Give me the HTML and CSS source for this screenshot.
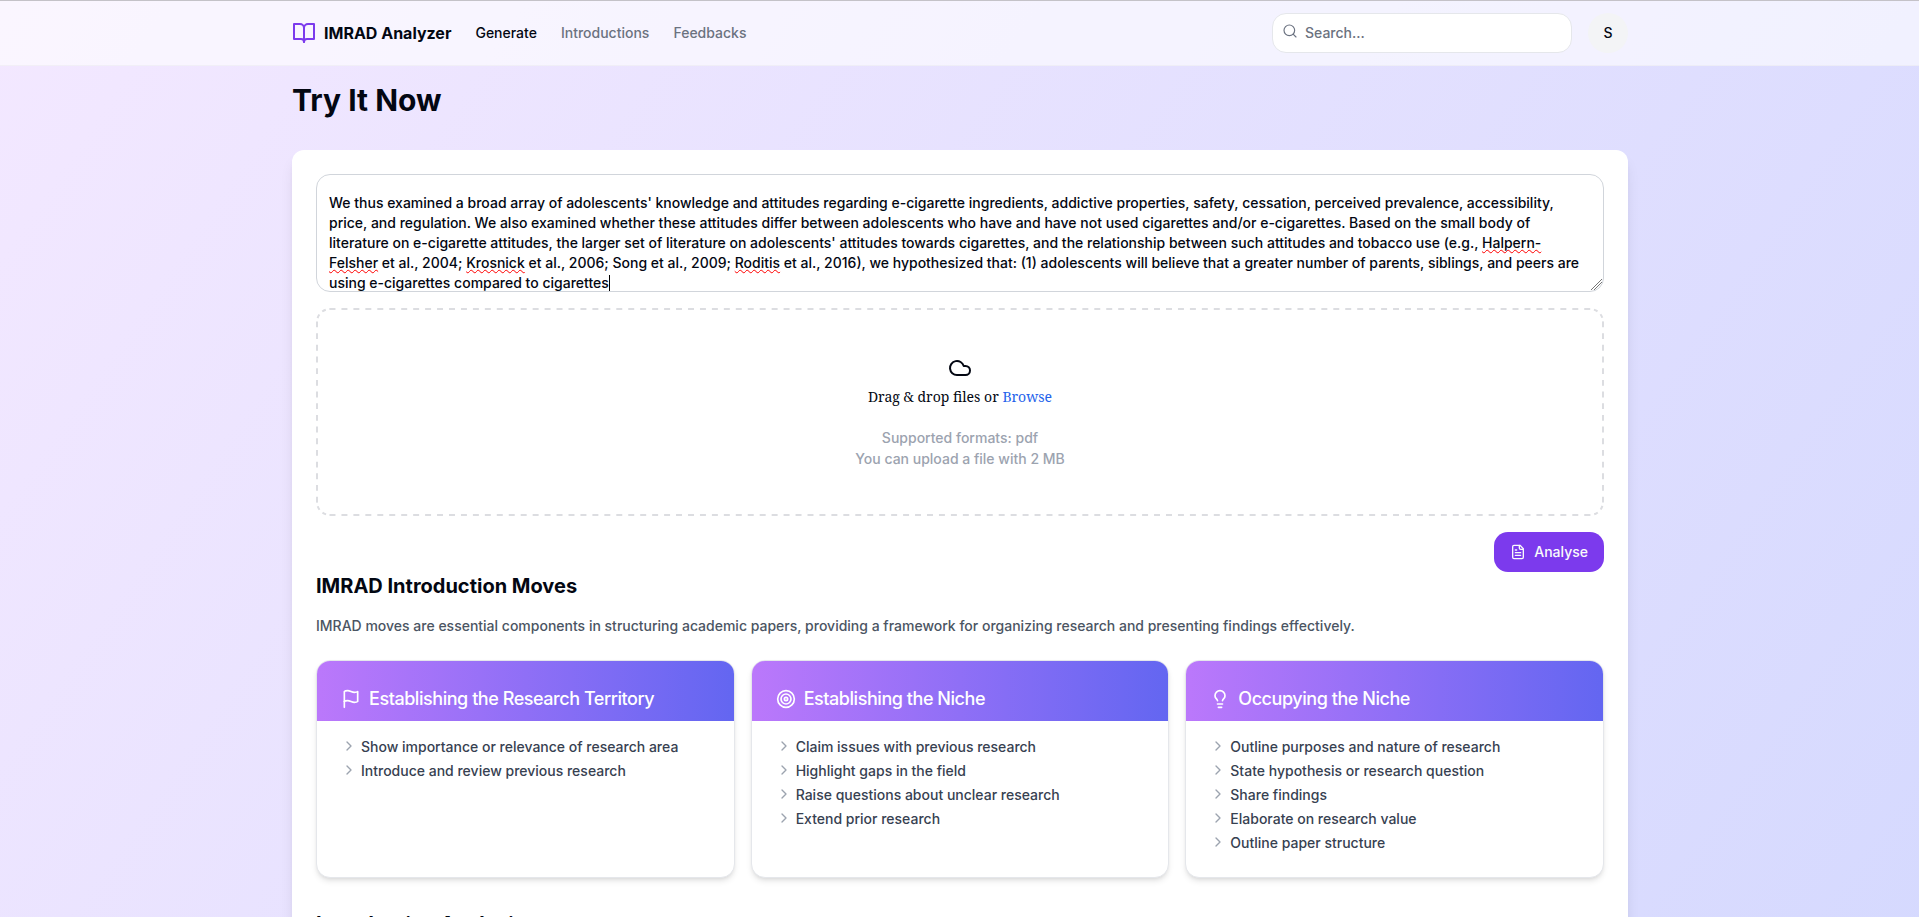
FILE: index.html
```html
<!DOCTYPE html>
<html lang="en">
<head>
<meta charset="utf-8">
<title>IMRAD Analyzer</title>
<link rel="stylesheet" href="styles.css">
</head>
<body>
<div class="page">
  <header class="header">
    <div class="container header-row">
      <a class="brand"><svg class="icon icon-lg brand-icon" viewBox="0 0 24 24"><path d="M2 3h6a4 4 0 0 1 4 4v14a3 3 0 0 0-3-3H2z"/><path d="M22 3h-6a4 4 0 0 0-4 4v14a3 3 0 0 1 3-3h7z"/></svg><span>IMRAD Analyzer</span></a>
      <nav class="nav"><a class="active">Generate</a><a>Introductions</a><a>Feedbacks</a></nav>
      <div class="search"><svg class="icon search-icon" viewBox="0 0 24 24"><circle cx="11" cy="11" r="8"/><path d="m21 21-4.3-4.3"/></svg><span>Search...</span></div>
      <div class="avatar">S</div>
    </div>
  </header>
  <main class="container">
    <h1>Try It Now</h1>
    <section class="panel">
      <div class="editor">We thus examined a broad array of adolescents' knowledge and attitudes regarding e-cigarette ingredients, addictive properties, safety, cessation, perceived prevalence, accessibility, price, and regulation. We also examined whether these attitudes differ between adolescents who have and have not used cigarettes and/or e-cigarettes. Based on the small body of literature on e-cigarette attitudes, the larger set of literature on adolescents' attitudes towards cigarettes, and the relationship between such attitudes and tobacco use (e.g., <span class="misspelt">Halpern-Felsher</span> et al., 2004; <span class="misspelt">Krosnick</span> et al., 2006; Song et al., 2009; <span class="misspelt">Roditis</span> et al., 2016), we hypothesized that: (1) adolescents will believe that a greater number of parents, siblings, and peers are using e-cigarettes compared to cigarettes<span class="caret"></span><svg class="grip" viewBox="0 0 11 11"><path d="M0 11 11 0M3 11l8-8M6 11l5-5M9 11l2-2"/></svg></div>
      <div class="dropzone">
        <svg class="dashes" viewBox="0 0 1288 208">
          <g stroke-dasharray="5.97 5.98"><path d="M13.5 1H1275"/><path d="M13.5 207H1275"/></g>
          <g stroke-dasharray="5.84 5.84"><path d="M1 13.5V195"/><path d="M1287 13.5V195"/></g>
          <g stroke-dasharray="4 4" stroke-dashoffset="4"><path d="M1 14A13 13 0 0 1 14 1"/><path d="M1274 1A13 13 0 0 1 1287 14"/><path d="M1287 194A13 13 0 0 1 1274 207"/><path d="M14 207A13 13 0 0 1 1 194"/></g>
        </svg>
        <svg class="icon icon-lg" viewBox="0 0 24 24"><path d="M17.5 19H9a7 7 0 1 1 6.71-9h1.79a4.5 4.5 0 1 1 0 9Z"/></svg>
        <p class="drop-title">Drag &amp; drop files or <a>Browse</a></p>
        <p class="drop-note">Supported formats: pdf<br>You can upload a file with 2 MB</p>
      </div>
      <div class="actions"><button class="button"><svg class="icon" viewBox="0 0 24 24"><path d="M15 2H6a2 2 0 0 0-2 2v16a2 2 0 0 0 2 2h12a2 2 0 0 0 2-2V7Z"/><path d="M14 2v4a2 2 0 0 0 2 2h4M10 9H8M16 13H8M16 17H8"/></svg>Analyse</button></div>
      <h2>IMRAD Introduction Moves</h2>
      <p class="lead">IMRAD moves are essential components in structuring academic papers, providing a framework for organizing research and presenting findings effectively.</p>
      <div class="cards">
        <article class="card">
          <h3><svg class="icon" viewBox="0 0 24 24"><path d="M4 15s1-1 4-1 5 2 8 2 4-1 4-1V3s-1 1-4 1-5-2-8-2-4 1-4 1z"/><path d="M4 22v-7"/></svg>Establishing the Research Territory</h3>
          <ul>
            <li><svg class="icon chevron" viewBox="0 0 24 24"><path d="m9 18 6-6-6-6"/></svg>Show importance or relevance of research area</li>
            <li><svg class="icon chevron" viewBox="0 0 24 24"><path d="m9 18 6-6-6-6"/></svg>Introduce and review previous research</li>
          </ul>
        </article>
        <article class="card">
          <h3><svg class="icon" viewBox="0 0 24 24"><circle cx="12" cy="12" r="10"/><circle cx="12" cy="12" r="6"/><circle cx="12" cy="12" r="2"/></svg>Establishing the Niche</h3>
          <ul>
            <li><svg class="icon chevron" viewBox="0 0 24 24"><path d="m9 18 6-6-6-6"/></svg>Claim issues with previous research</li>
            <li><svg class="icon chevron" viewBox="0 0 24 24"><path d="m9 18 6-6-6-6"/></svg>Highlight gaps in the field</li>
            <li><svg class="icon chevron" viewBox="0 0 24 24"><path d="m9 18 6-6-6-6"/></svg>Raise questions about unclear research</li>
            <li><svg class="icon chevron" viewBox="0 0 24 24"><path d="m9 18 6-6-6-6"/></svg>Extend prior research</li>
          </ul>
        </article>
        <article class="card">
          <h3><svg class="icon" viewBox="0 0 24 24"><path d="M15 14c.2-1 .7-1.7 1.5-2.5 1-.9 1.5-2.2 1.5-3.5A6 6 0 0 0 6 8c0 1 .2 2.2 1.5 3.5.7.7 1.3 1.5 1.5 2.5M9 18h6M10 22h4"/></svg>Occupying the Niche</h3>
          <ul>
            <li><svg class="icon chevron" viewBox="0 0 24 24"><path d="m9 18 6-6-6-6"/></svg>Outline purposes and nature of research</li>
            <li><svg class="icon chevron" viewBox="0 0 24 24"><path d="m9 18 6-6-6-6"/></svg>State hypothesis or research question</li>
            <li><svg class="icon chevron" viewBox="0 0 24 24"><path d="m9 18 6-6-6-6"/></svg>Share findings</li>
            <li><svg class="icon chevron" viewBox="0 0 24 24"><path d="m9 18 6-6-6-6"/></svg>Elaborate on research value</li>
            <li><svg class="icon chevron" viewBox="0 0 24 24"><path d="m9 18 6-6-6-6"/></svg>Outline paper structure</li>
          </ul>
        </article>
      </div>
      <h2 class="next-heading">Introduction Analysis</h2>
    </section>
  </main>
</div>
</body>
</html>
```
FILE: styles.css
```css
* { box-sizing: border-box; margin: 0; padding: 0; }
html, body { height: 100%; overflow: hidden; }
body { font: 14px/20px Inter, "Open Sans", sans-serif; color: #030712; border-top: 1px solid #c4c2c8; }
.page { height: 100%; overflow: hidden; padding-left: 1px; background: linear-gradient(to bottom right, #f3e8ff, #c7d2fe) 0 0 / 100% 2780px no-repeat; }
.container { width: 1336px; margin: 0 auto; }
.icon { width: 16px; height: 16px; flex: none; fill: none; stroke: currentColor; stroke-width: 2; stroke-linecap: round; stroke-linejoin: round; }
.icon-lg { width: 24px; height: 24px; }

.header { height: 65px; margin-left: -1px; padding-left: 1px; background: rgba(255, 255, 255, .6); border-bottom: 1px solid rgba(229, 231, 235, .4); }
.header-row { height: 64px; display: flex; align-items: center; }
.brand { display: flex; align-items: center; gap: 8px; font-size: 16px; font-weight: 700; line-height: 24px; }
.brand-icon { color: #7c3aed; }
.nav { display: flex; gap: 24px; margin-left: 24px; font-weight: 500; color: #6b7280; }
.nav .active { color: #030712; }
.search { margin-left: auto; width: 300px; height: 40px; display: flex; align-items: center; gap: 7px; padding: 0 9px; background: #fff; border: 1px solid #e5e7eb; border-radius: 14px; color: #6b7280; font-weight: 500; }
.search-icon { margin-bottom: 5px; stroke-width: 1.75; }
.avatar { width: 40px; height: 40px; margin-left: 16px; display: grid; place-items: center; border-radius: 50%; background: #f3f4f6; font-weight: 500; }

h1 { font-size: 30px; line-height: 36px; font-weight: 700; padding: 16px 0 32px; }
.panel { height: 1000px; padding: 24px; background: #fff; border-radius: 12px; box-shadow: 0 10px 15px -3px rgba(0, 0, 0, .1), 0 4px 6px -4px rgba(0, 0, 0, .1); }
.editor { position: relative; height: 118px; padding: 18px 20px 0 12px; border: 1px solid #d1d5db; border-radius: 14px; overflow: hidden; font-weight: 500; }
.misspelt { text-decoration: underline wavy #f00 1px; text-underline-offset: 1px; text-decoration-skip-ink: none; }
.caret { display: inline-block; width: 1px; height: 17px; margin-right: -1px; vertical-align: -4px; background: #000; }
.grip { position: absolute; right: 1px; bottom: 1px; width: 11px; height: 11px; fill: none; stroke: #777; stroke-width: 1; }
.dropzone { position: relative; height: 208px; margin-top: 16px; display: flex; flex-direction: column; align-items: center; padding-top: 48px; }
.dashes { position: absolute; inset: 0; width: 100%; height: 100%; fill: none; stroke: #dcdde1; stroke-width: 2; }
.drop-title { margin-top: 6px; font: 14px/21px "Noto Serif", "Droid Serif", "DejaVu Serif", serif; }
.drop-title a { color: #2563eb; }
.drop-note { margin-top: 20px; line-height: 21px; text-align: center; color: #9ca3af; font-weight: 500; }
.actions { display: flex; justify-content: flex-end; margin-top: 16px; }
.button { height: 40px; display: flex; align-items: center; gap: 8px; padding: 0 16px; border: 0; border-radius: 14px; background: #7c3aed; color: #f9fafb; font: 500 14px/20px Inter, sans-serif; }
h2 { font-size: 20px; line-height: 28px; font-weight: 700; }
.lead { margin: 16px 0 24px; color: #4b5563; font-weight: 500; }
.cards { display: grid; grid-template-columns: repeat(3, 1fr); gap: 16px; }
.card { height: 218px; border: 1px solid #e5e7eb; border-radius: 14px; overflow: hidden; background: #fff; box-shadow: 0 4px 6px -1px rgba(0, 0, 0, .1), 0 2px 4px -2px rgba(0, 0, 0, .1); }
.card h3 { height: 60px; display: flex; align-items: center; gap: 8px; padding: 16px 24px 0; background: linear-gradient(to right, #bb78fb, #6366f1); color: #fff; font-size: 18px; line-height: 28px; font-weight: 500; letter-spacing: -.45px; }
.card h3 .icon { width: 20px; height: 20px; }
.card ul { list-style: none; display: grid; gap: 4px; padding: 16px 24px; color: #374151; font-weight: 500; }
.card li { display: flex; align-items: center; gap: 4px; }
.chevron { color: #9ca3af; margin-bottom: 2px; }
.next-heading { margin-top: 32px; }
```
